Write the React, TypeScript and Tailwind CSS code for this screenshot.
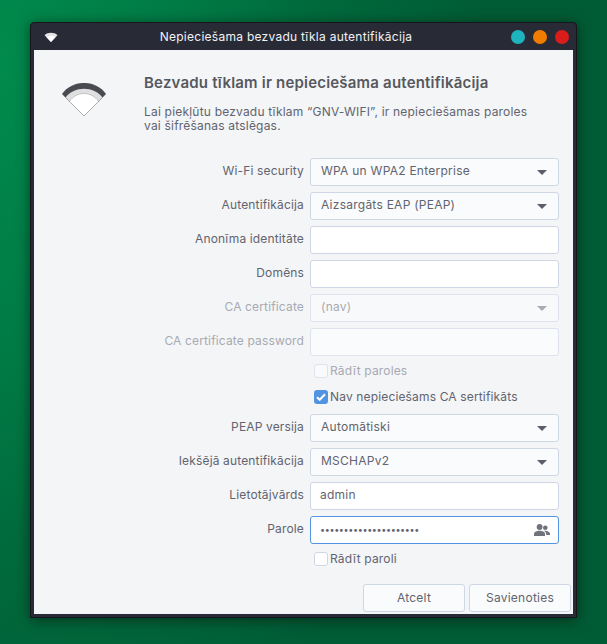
import React from "react";

const font = { fontFamily: '"Inter", "Noto Sans", sans-serif' };

function Arrow({ dim }: { dim?: boolean }) {
  return (
    <svg width="10" height="5" viewBox="0 0 10 5" className="shrink-0">
      <path d="M0 0H10L5 5Z" fill={dim ? "#a8abb3" : "#5c5f69"} />
    </svg>
  );
}

function Label({ children, dim }: { children: React.ReactNode; dim?: boolean }) {
  return (
    <div className={`w-[276px] shrink-0 pb-[2px] pr-[6px] text-right text-[12px] tracking-[0.15px] ${dim ? "text-[#a7aab2]" : "text-[#61646f]"}`}>
      {children}
    </div>
  );
}

function SelectRow({ label, value, dim }: { label: string; value: string; dim?: boolean }) {
  return (
    <div className="flex h-[28px] items-center">
      <Label dim={dim}>{label}</Label>
      <div className={`flex h-[28px] w-[249px] items-center justify-between rounded-[3px] border pl-[10px] pr-[11px] text-[12px] tracking-[0.25px] ${dim ? "border-[#dde2ee] bg-[#f8f9fb] text-[#a7aab2]" : "border-[#cfd6e6] bg-[#fafbfc] text-[#61646f]"}`}>
        <span className="pb-[2px]">{value}</span>
        <Arrow dim={dim} />
      </div>
    </div>
  );
}

function InputRow({ label, value, dim }: { label: string; value?: string; dim?: boolean }) {
  return (
    <div className="flex h-[28px] items-center">
      <Label dim={dim}>{label}</Label>
      <div className={`flex h-[28px] w-[249px] items-center rounded-[3px] border px-[9px] pb-[2px] text-[12px] tracking-[0.25px] text-[#61646f] ${dim ? "border-[#dde2ee] bg-[#fafbfc]" : "border-[#cfd6e6] bg-white"}`}>
        {value}
      </div>
    </div>
  );
}

function CheckRow({ label, checked, dim }: { label: string; checked?: boolean; dim?: boolean }) {
  return (
    <div className="flex h-[26px] items-center pl-[280px]">
      {checked ? (
        <span className="flex h-[14px] w-[14px] items-center justify-center rounded-[3px] bg-[#5294e2]">
          <svg width="10" height="8" viewBox="0 0 10 8">
            <path d="M1 4.2L3.7 6.8L9 1.2" fill="none" stroke="#fff" strokeWidth="2" />
          </svg>
        </span>
      ) : (
        <span className={`h-[14px] w-[14px] rounded-[3px] border ${dim ? "border-[#dde2ee] bg-[#f9fafb]" : "border-[#cfd6e6] bg-white"}`} />
      )}
      <span className={`ml-[2px] text-[12px] tracking-[0.15px] ${dim ? "text-[#a7aab2]" : "text-[#61646f]"}`}>{label}</span>
    </div>
  );
}

function WifiLarge() {
  return (
    <svg width="44" height="33" viewBox="0 0 44 33">
      <path d="M0 11C10.5 -3.7 33.5 -3.7 44 11L22 33Z" fill="#4a4b50" />
      <path d="M3.5 14.5C12 2.9 32 2.9 40.5 14.5L22 33Z" fill="#dfdfe0" />
      <path d="M7.5 18.5C14 7.9 30 7.9 36.5 18.5L22 33Z" fill="#ffffff" />
      <path d="M7.5 18.5C14 7.9 30 7.9 36.5 18.5" fill="none" stroke="#a5a5a9" strokeWidth="0.6" />
      <path d="M0.5 11.5L22 33L43.5 11.5" fill="none" stroke="#8d8d92" strokeWidth="0.6" />
    </svg>
  );
}

function WifiSmall() {
  return (
    <svg width="14" height="10" viewBox="0 0 14 10">
      <path d="M0.5 3.2C4 0 10 0 13.5 3.2L7 10Z" fill="#e4e4e6" />
      <path d="M2.6 5.2C5 3.2 9 3.2 11.4 5.2L7 10Z" fill="#ffffff" />
    </svg>
  );
}

function PeopleIcon() {
  return (
    <svg width="16" height="12" viewBox="0 0 16 12">
      <circle cx="5.6" cy="3" r="2.9" fill="#70737c" />
      <path d="M0 12V10C0 7.8 3 6.7 5.6 6.7S11 7.8 11 10V12Z" fill="#70737c" />
      <circle cx="11.3" cy="3.8" r="2.3" fill="#70737c" />
      <path d="M10 6.8C13 6.5 16 8 16 10V11H12.2V10C12.2 8.7 11.2 7.6 10 6.8Z" fill="#70737c" />
    </svg>
  );
}

function Dot({ className }: { className: string }) {
  return <span className={`h-[14px] w-[14px] rounded-full ${className}`} />;
}

function Button({ children }: { children: React.ReactNode }) {
  return (
    <div className="flex h-[28px] w-[102px] items-center justify-center rounded-[3px] border border-[#cfd6e6] bg-[#fafbfc] text-[12px] tracking-[0.25px] text-[#61646f]">
      {children}
    </div>
  );
}

export default function App() {
  return (
    <div
      style={font}
      className="h-[644px] w-[607px] overflow-hidden bg-[#005c35] bg-[radial-gradient(ellipse_480px_750px_at_0%_10%,#008a4c_0%,#007a45_40%,#006a3c_65%,#005c35_100%)] pl-[30px] pt-[22px]"
    >
      <div className="h-[596px] w-[547px] rounded-t-[4px] border border-[#15161c] bg-[#282a36] shadow-[0_2px_14px_rgba(0,0,0,0.5)]">
        <div className="flex h-[27px] items-center pl-[13px] pr-[7px]">
          <WifiSmall />
          <div className="flex-1 pl-[3px] text-center text-[12px] tracking-[0.27px] text-[#f1f2f4]">
            Nepieciešama bezvadu tīkla autentifikācija
          </div>
          <div className="flex gap-[8px]">
            <Dot className="bg-[#1eb4bd]" />
            <Dot className="bg-[#f27c00]" />
            <Dot className="bg-[#d91c1c]" />
          </div>
        </div>
        <div className="mx-[3px] h-[564px] w-[539px] bg-[#f4f5f7]">
          <div className="flex h-[108px] pl-[28px] pt-[33px]">
            <WifiLarge />
            <div className="-mt-[10px] ml-[38px]">
              <div className="text-[15px] font-semibold leading-[20px] tracking-[0.2px] text-[#56585f]">
                Bezvadu tīklam ir nepieciešama autentifikācija
              </div>
              <div className="mt-[12px] w-[400px] text-[12px] leading-[14px] tracking-[0.2px] text-[#61646f]">
                Lai piekļūtu bezvadu tīklam “GNV-WIFI”, ir nepieciešamas paroles
                <br />
                vai šifrēšanas atslēgas.
              </div>
            </div>
          </div>
          <div className="flex flex-col gap-[6px]">
            <SelectRow label="Wi-Fi security" value="WPA un WPA2 Enterprise" />
            <SelectRow label="Autentifikācija" value="Aizsargāts EAP (PEAP)" />
            <InputRow label="Anonīma identitāte" />
            <InputRow label="Domēns" />
            <SelectRow label="CA certificate" value="(nav)" dim />
            <InputRow label="CA certificate password" dim />
          </div>
          <div className="mb-[4px] mt-[2px]">
            <CheckRow label="Rādīt paroles" dim />
            <CheckRow label="Nav nepieciešams CA sertifikāts" checked />
          </div>
          <div className="flex flex-col gap-[6px]">
            <SelectRow label="PEAP versija" value="Automātiski" />
            <SelectRow label="Iekšējā autentifikācija" value="MSCHAPv2" />
            <InputRow label="Lietotājvārds" value="admin" />
            <div className="flex h-[28px] items-center">
              <Label>Parole</Label>
              <div className="flex h-[28px] w-[249px] items-center justify-between rounded-[3px] border border-[#5294e2] bg-white pl-[9px] pr-[8px] text-[9px] text-[#61646f]">
                <span className="tracking-[-0.35px]">•••••••••••••••••••••</span>
                <PeopleIcon />
              </div>
            </div>
          </div>
          <div className="mt-[2px]">
            <CheckRow label="Rādīt paroli" />
          </div>
          <div className="mt-[12px] flex justify-end gap-[4px] pr-[2px]">
            <Button>Atcelt</Button>
            <Button>Savienoties</Button>
          </div>
        </div>
      </div>
    </div>
  );
}
